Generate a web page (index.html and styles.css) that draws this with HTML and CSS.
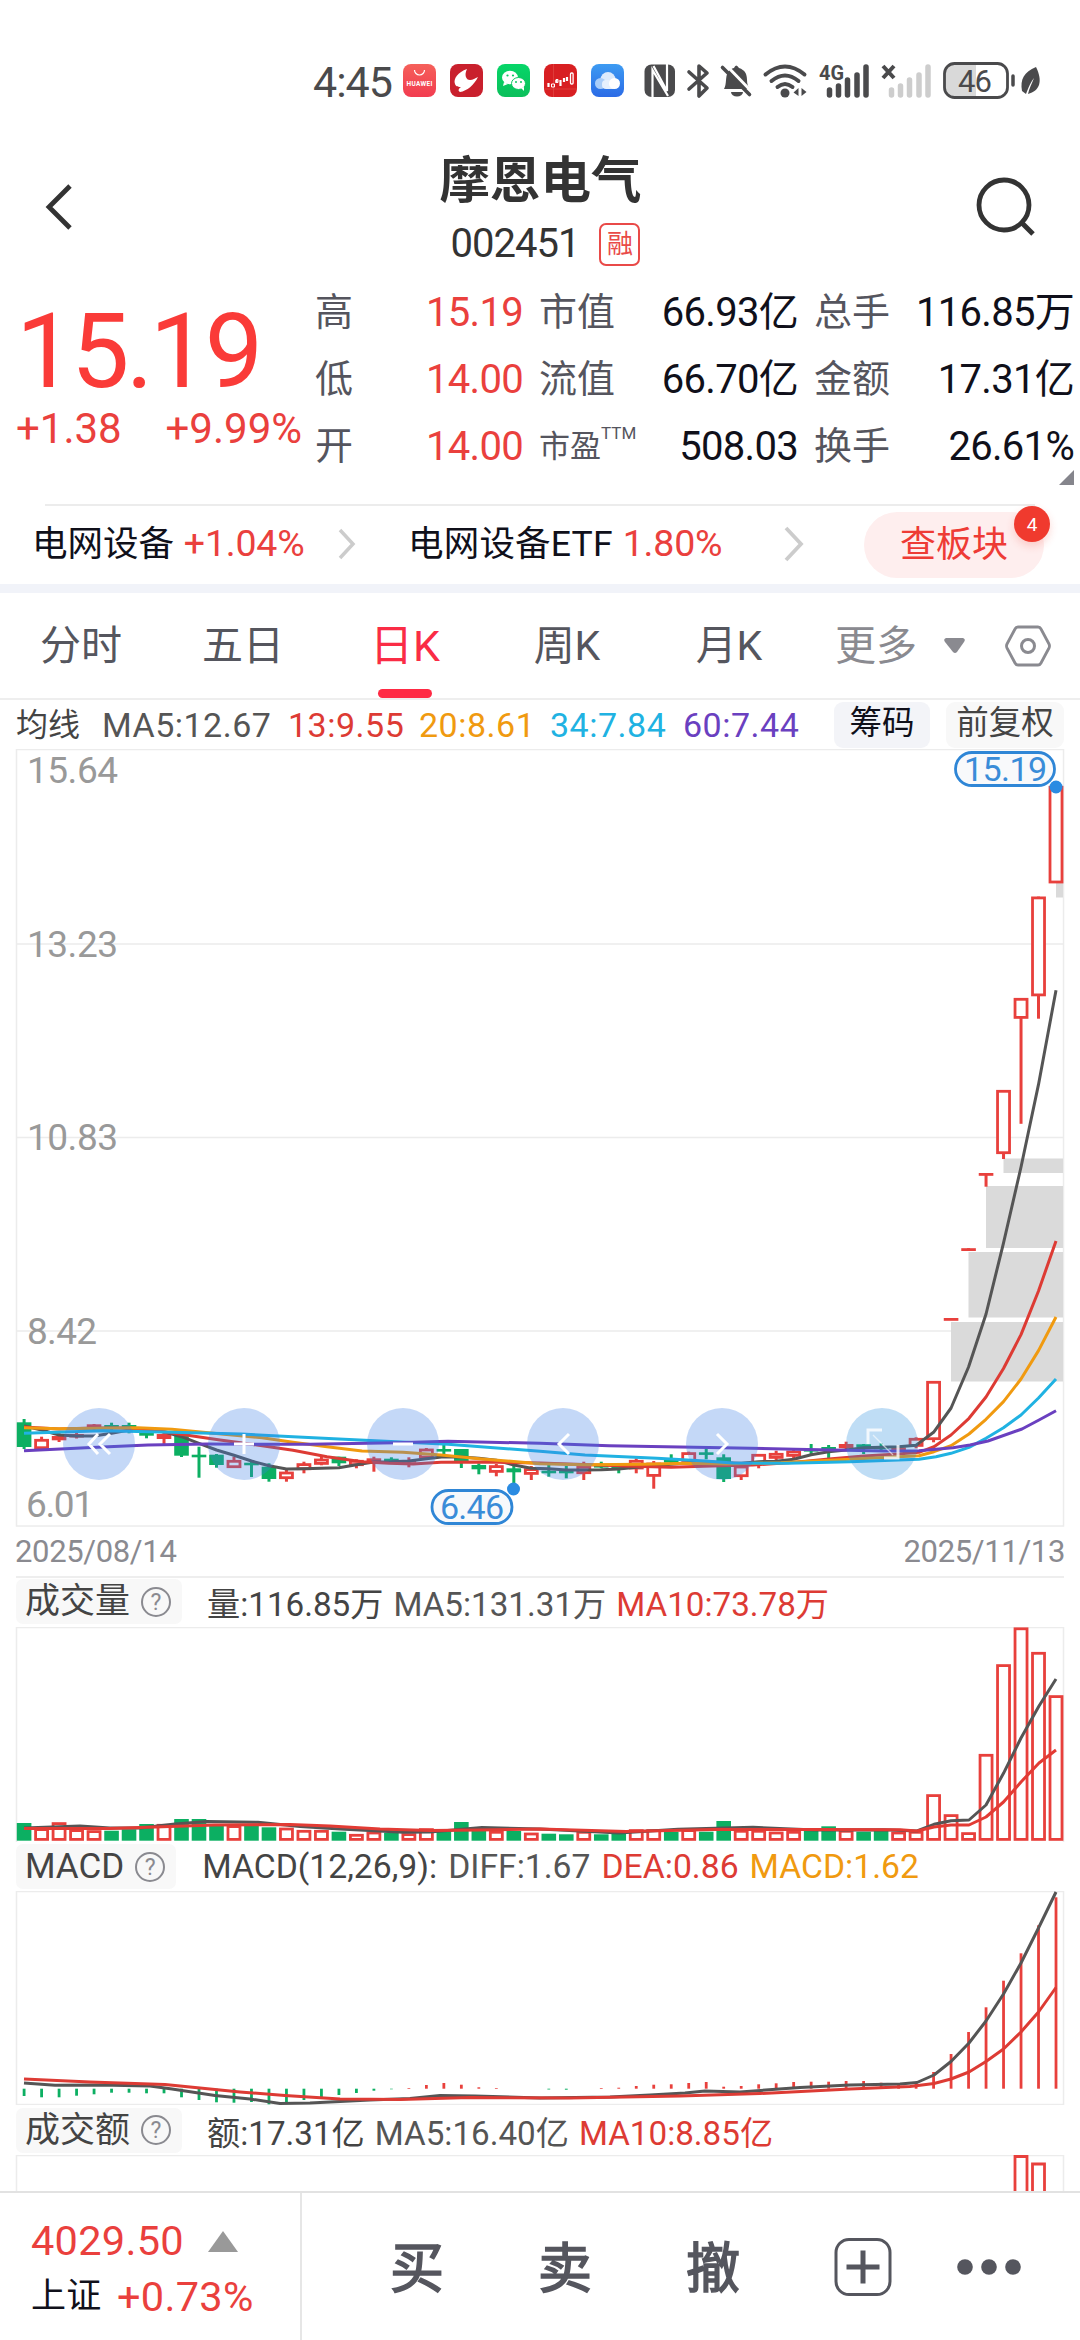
FILE: index.html
```html
<!DOCTYPE html>
<html lang="zh-CN">
<head>
    <meta charset="UTF-8" />
    <title>摩恩电气 002451</title>
    <link rel="stylesheet" href="styles.css">
</head>
<body>
    <div class="status-bar">
        <span class="clock">4:45</span>
        <svg class="status-icons" width="680" height="50" viewBox="400 55 680 50">
            <defs>
                <linearGradient id="hw" x1="0" y1="0" x2="0" y2="1"><stop offset="0" stop-color="#f5605a"/><stop offset="1" stop-color="#f23c50"/></linearGradient>
                <linearGradient id="cloud" x1="0" y1="0" x2="0" y2="1"><stop offset="0" stop-color="#3d9bf2"/><stop offset="1" stop-color="#2b6be6"/></linearGradient>
                <linearGradient id="wx" x1="0" y1="0" x2="0" y2="1"><stop offset="0" stop-color="#06d668"/><stop offset="1" stop-color="#0bbf5b"/></linearGradient>
            </defs>
            <rect x="403" y="64" width="33" height="33" rx="8" fill="url(#hw)"/>
            <path d="M414.500 70a5 5 0 0 0 10 0" fill="none" stroke="#fff" stroke-width="1.200"/>
            <text x="406.500" y="85.500" font-size="6.500" font-weight="700" fill="#fff" textLength="26">HUAWEI</text>
            <rect x="450" y="64" width="33" height="33" rx="8" fill="#c9202d"/>
            <path d="M467 69C458 72 453 79 455 84c1 3 4 3 6 3-3 2-3 4-1 5 7-1 14-7 18-15-3 1-5 3-8 3-4 0-6-5-3-11z" fill="#fff"/>
            <rect x="497" y="64" width="33" height="33" rx="8" fill="url(#wx)"/>
            <ellipse cx="510" cy="77.500" rx="8" ry="6.800" fill="#fff"/><path d="M504 82l-1 4 5-2z" fill="#fff"/>
            <ellipse cx="518.500" cy="83.500" rx="7" ry="6" fill="#fff" stroke="#0bc860" stroke-width="1"/><path d="M521 88l3 3 0-4z" fill="#fff"/>
            <g fill="#0bc860"><circle cx="507.500" cy="75.500" r="1.100"/><circle cx="513" cy="75.500" r="1.100"/><circle cx="516" cy="82" r="1"/><circle cx="521" cy="82" r="1"/></g>
            <rect x="544" y="64" width="33" height="33" rx="8" fill="#d81f22"/>
            <path d="M544 89h33M553.500 64v33" stroke="#e2504c" stroke-width=".6"/>
            <path d="M548.500 83v4M556.500 80v3M560.500 80v6M564 78v4M567 77v4" stroke="#fff" stroke-width="2.200"/>
            <path d="M551.500 84h3v3h-3zM556 79.500h2v3h-2z" fill="none" stroke="#fff" stroke-width="1"/>
            <rect x="570.500" y="73" width="2.600" height="11" rx="1" fill="none" stroke="#fff" stroke-width="1.300"/>
            <rect x="591" y="64" width="33" height="33" rx="8" fill="url(#cloud)"/>
            <circle cx="608" cy="79.500" r="7.500" fill="#dceafc"/><circle cx="600.500" cy="83.500" r="5.500" fill="#a9cdf9"/><rect x="602" y="80" width="14" height="9" rx="4" fill="#e6f0fd"/><circle cx="614.500" cy="83.500" r="5.500" fill="#fff"/>

            <!-- nfc -->
            <rect x="644.500" y="64.500" width="30.500" height="32.500" rx="7" fill="#4a4a4c"/>
            <path d="M652.500 97V70l15.500 26M667 64v27L653.500 66" fill="none" stroke="#fff" stroke-width="2.200"/>
            <!-- bluetooth -->
            <path d="M689 72l18 16-8 8V66l8 7-18 16" fill="none" stroke="#4a4a4c" stroke-width="3.600" stroke-linejoin="round" stroke-linecap="round"/>
            <!-- muted bell -->
            <path d="M724 89c3-5 1-12 4-17 2-3 5-4 6-4q2-5 5 0c6 2 8 6 8 12 0 4 1 7 3 9z" fill="#4a4a4c"/>
            <path d="M731 92h12a6 4.500 0 0 1-12 0z" fill="#4a4a4c"/>
            <path d="M725 64l28 29" stroke="#fff" stroke-width="3"/>
            <path d="M722.500 67.500l27 27" stroke="#4a4a4c" stroke-width="3.600" stroke-linecap="round"/>
            <!-- wifi -->
            <g fill="none" stroke="#4a4a4c" stroke-width="4" stroke-linecap="round">
                <path d="M765.500 74.500q19.500-16 39 0M771.500 81q13.500-11 27 0M777.500 87q7.500-6 15 0"/>
            </g>
            <circle cx="785" cy="93" r="4.500" fill="#4a4a4c"/>
            <path d="M798.500 88v8l-5-3.500zM801.500 96v-8l5 4z" fill="#4a4a4c"/>
            <!-- cellular -->
            <text x="819" y="80" font-size="21" font-weight="700" fill="#4a4a4c" textLength="25" lengthAdjust="spacingAndGlyphs">4G</text>
            <path d="M829.500 90v5M838.500 86v9M847.500 80v15M857 75v20M866 67v28" stroke="#4a4a4c" stroke-width="5.500" stroke-linecap="round"/>
            <path d="M883 66l11 12M894 66l-11 12" stroke="#4a4a4c" stroke-width="4"/>
            <path d="M891.500 90v5M900.500 86v9M909.500 80v15M919 75v20M928 67v28" stroke="#cdcdcd" stroke-width="5.500" stroke-linecap="round"/>
            <!-- battery -->
            <path d="M953 64h23v33h-23q-8 0-8-8V72q0-8 8-8z" fill="#d9d9d9"/>
            <rect x="944.500" y="63.500" width="63" height="34" rx="10" fill="none" stroke="#4a4a4c" stroke-width="2.800"/>
            <path d="M1013 76v9" stroke="#4a4a4c" stroke-width="3.500" stroke-linecap="round"/>
            <text x="958" y="92" font-size="31" fill="#4a4a4c" textLength="34">46</text>
            <path d="M1036 67c-12 5-16 12-14 24l4 3c3-8 5-12 8-16-2 5-5 11-6 16 12-3 15-13 8-27z" fill="#4a4a4c"/>
        </svg>
    </div>

    <header class="stock-header">
        <svg class="back" width="36" height="52" viewBox="0 0 36 52"><path d="M28 5L7 26l21 21" fill="none" stroke="#333" stroke-width="4.800"/></svg>
        <div class="stock-title">
            <h1>摩恩电气</h1>
            <div class="stock-code"><span>002451</span><span class="margin-tag">融</span></div>
        </div>
        <svg class="search" width="62" height="62" viewBox="0 0 62 62"><circle cx="29" cy="30" r="25" fill="none" stroke="#333" stroke-width="4.800"/><path d="M46 47l12 12" stroke="#333" stroke-width="5"/></svg>
    </header>

    <section class="quote">
        <div class="price">
            <div class="last">15.19</div>
            <div class="change"><span>+1.38</span><span>+9.99%</span></div>
        </div>
        <dl class="stats">
            <dt>高</dt><dd class="up">15.19</dd><dt>市值</dt><dd>66.93亿</dd><dt>总手</dt><dd>116.85万</dd>
            <dt>低</dt><dd class="up">14.00</dd><dt>流值</dt><dd>66.70亿</dd><dt>金额</dt><dd>17.31亿</dd>
            <dt>开</dt><dd class="up">14.00</dd><dt class="pe">市盈<sup>TTM</sup></dt><dd>508.03</dd><dt>换手</dt><dd>26.61%</dd>
        </dl>
        <i class="corner"></i>
    </section>

    <section class="sector">
        <div class="sector-item">电网设备 <span class="up">+1.04%</span></div>
        <svg class="chevron" width="20" height="34" viewBox="0 0 20 34"><path d="M3 3l13 14L3 31" fill="none" stroke="#ccc" stroke-width="3.500"/></svg>
        <div class="sector-item etf">电网设备ETF <span class="up">1.80%</span></div>
        <svg class="chevron last-chevron" width="22" height="38" viewBox="0 0 22 38"><path d="M3 3l15 16L3 35" fill="none" stroke="#ccc" stroke-width="3.800"/></svg>
        <div class="sector-btn">查板块<span class="badge">4</span></div>
    </section>

    <nav class="tabs">
        <span class="tab">分时</span>
        <span class="tab">五日</span>
        <span class="tab active">日K</span>
        <span class="tab">周K</span>
        <span class="tab">月K</span>
        <span class="tab more">更多</span>
        <svg width="24" height="18" viewBox="0 0 24 18"><path d="M4 1h17q3 1 1 4l-7 10q-2 2-4 0L3 5Q1 2 4 1z" fill="#8a8a90"/></svg>
        <svg class="settings" width="48" height="44" viewBox="0 0 48 44"><path d="M14 3h20q2 0 3 2l8 15q1 2 0 4l-8 15q-1 2-3 2H14q-2 0-3-2L3 24q-1-2 0-4l8-15q1-2 3-2z" fill="none" stroke="#8a8a90" stroke-width="2.800"/><circle cx="24" cy="22" r="6.500" fill="none" stroke="#8a8a90" stroke-width="3"/></svg>
    </nav>

    <div class="ma-row">
        <span class="ma-name">均线</span>
        <span class="ma ma5">MA5:12.67</span>
        <span class="ma ma13">13:9.55</span>
        <span class="ma ma20">20:8.61</span>
        <span class="ma ma34">34:7.84</span>
        <span class="ma ma60">60:7.44</span>
        <span class="chip chips">筹码</span>
        <span class="chip adjust">前复权</span>
    </div>

    <svg class="chart" width="1080" height="778" viewBox="0 0 1080 778">
        <g class="frame">
            <rect x="16.500" y=".5" width="1047" height="776.500"/>
            <path d="M16 195h1047M16 388.500h1047M16 582h1047"/>
        </g>
        <g class="axis">
            <text x="27" y="34" textLength="91">15.64</text>
            <text x="27" y="208" textLength="91">13.23</text>
            <text x="27" y="401" textLength="91">10.83</text>
            <text x="27" y="595" textLength="70">8.42</text>
            <text x="26" y="768" textLength="68">6.01</text>
        </g>
        <g fill="#dadada">
            <rect x="951" y="573" width="112" height="59.500"/>
            <rect x="968.500" y="503" width="94.500" height="65.500"/>
            <rect x="986" y="437" width="77" height="62"/>
            <rect x="1003.500" y="409.500" width="59.500" height="14.500"/>
            <rect x="1056" y="134" width="7" height="14.500"/>
        </g>
        <g id="candles"></g>
        <g class="lines">
            <polyline id="ma5" stroke="#555"/>
            <polyline stroke="#dd3b34" points="24,678 59,680 94,679 130,679 165,683 186,686 220,691 257,696 293,701.3 327,707.7 362,712.7 389,714.3 413,715 441,713.3 482,713 540,714 626,717 671,718.3 712,717 753,716 795,713.3 829,710 864,707 898,705 919,703.3 934,697.7 951,686 969,669.3 986,648 1003.5,619.5 1021,585.6 1038.5,542 1056,492"/>
            <polyline stroke="#f09a10" points="24,678.7 59,679.7 138,678.7 172,680.3 224,685.3 262,688.7 293,693.3 327,697.7 362,702 403,703.3 441,706 482,710 540,714.7 585,715.7 643,715.3 688,714.3 726,715 781,713.7 850,710.3 898,707.7 919,706.7 934,702.7 951,696.7 969,685 986,670.3 1003.5,652.6 1021,630 1038.5,601.6 1056,568"/>
            <polyline stroke="#20b2e2" points="24,684.3 103,681.7 172,683.3 241,685 293,687.7 344,690.3 396,692.7 448,695.3 540,702.3 585,706 657,709.3 705,712 733,714 788,714.3 850,712.7 919,710.3 936,707.7 951,704.3 969,698.3 986,689.3 1003.5,678.7 1021,666 1038.5,649 1056,630"/>
            <polyline stroke="#6a40c0" points="24,701.7 86,698.7 148,696 207,695 310,695.3 396,693.7 448,692.3 540,694.3 609,696.7 723,698.7 795,700.3 884,702 919,701.7 953,698.7 970,696 988,692 1022,680 1039,671 1056,661.7"/>
        </g>
        <g class="controls">
            <circle cx="99" cy="695" r="36"/><circle cx="244" cy="695" r="36"/><circle cx="403" cy="695" r="36"/>
            <circle cx="563" cy="695" r="36"/><circle cx="722" cy="695" r="36"/><circle class="full" cx="882" cy="695" r="36"/>
            <path d="M98 685l-9 10 9 10M110 685l-10 10 10 10M234 695h20M244 685v20M393 695h20M569 685l-10 10 10 10M717 685l10 10-10 10"/>
            <path class="thin" d="M868 695v-14h14M898 696v13h-14"/>
            <path class="thinner" d="M873 686l20 20"/>
        </g>
        <g class="marks">
            <rect x="955.500" y="3.500" width="99" height="33" rx="16.500"/>
            <circle cx="1056" cy="38" r="6.500"/>
            <text x="964" y="32" textLength="83">15.19</text>
            <rect x="432" y="741.500" width="80" height="33" rx="16.500"/>
            <circle cx="513.500" cy="740" r="6.500"/>
            <text x="440" y="770" textLength="64">6.46</text>
        </g>
    </svg>
    <div class="dates"><span>2025/08/14</span><span>2025/11/13</span></div>

    <div class="indicator first">
        <span class="ind-name">成交量<i class="help">?</i></span>
        <span class="val dark">量:116.85万</span><span class="val">MA5:131.31万</span><span class="val red">MA10:73.78万</span>
    </div>
    <svg class="chart" width="1080" height="215" viewBox="0 0 1080 215">
        <g class="frame"><path d="M16.500 215V.5h1047V215"/></g>
        <g id="volume"></g>
        <g class="lines">
            <polyline stroke="#555" points="24,201 80,199 110,201 140,201 175,197 207,194.500 258,195.300 300,199.500 340,202 403,205.300 430,205 482,200.500 540,202 619,206 678,202.300 753,200.300 815,203 884,202.700 917,204 934,197.300 951,193.700 969,193 986,178 1003.5,146.300 1021,111 1039,79 1056,52"/>
            <polyline stroke="#e23b34" points="24,201.500 110,201.500 155,200 215,198 290,197.500 330,199 380,202 430,203.500 480,203 540,202 626,204.500 713,202.500 815,202.500 900,202.700 917,204 934,200 951,198 969,198 986,190 1003.500,175 1021,155 1039,136 1056,123"/>
        </g>
    </svg>

    <div class="indicator second">
        <span class="ind-name">MACD<i class="help">?</i></span>
        <span class="val dark">MACD(12,26,9):</span><span class="val">DIFF:1.67</span><span class="val red">DEA:0.86</span><span class="val orange">MACD:1.62</span>
    </div>
    <svg class="chart" width="1080" height="214" viewBox="0 0 1080 214">
        <g class="frame"><rect x="16.500" y=".5" width="1047" height="213"/></g>
        <g id="macd"></g>
        <g class="lines">
            <polyline stroke="#555" points="24,192 55,194.300 100,194 150,195 172,198 215,204.500 250,208 280,212.500 310,212 370,209 410,207.500 440,204.500 475,205 540,207 610,206 650,204 685,202 705,200 740,201 800,196.500 850,194 900,193 917,191.500 934,184 951,170.500 969,152 986,130 1003.500,103 1021,72 1038.500,37 1056,1"/>
            <polyline stroke="#dd3b34" points="24,188 90,191 165,193.500 200,197 240,201 285,204.500 340,208 400,208.500 470,206.500 570,207 680,205 760,202.500 850,198 910,195.500 934,192.500 951,188 969,181 986,170.500 1003.500,158 1021,141 1038.500,121 1056,96.500"/>
        </g>
    </svg>

    <div class="indicator third">
        <span class="ind-name">成交额<i class="help">?</i></span>
        <span class="val dark">额:17.31亿</span><span class="val">MA5:16.40亿</span><span class="val red">MA10:8.85亿</span>
    </div>
    <svg class="chart" width="1080" height="36" viewBox="0 0 1080 36">
        <g class="frame"><path d="M16.500 40V.5h1047V40"/></g>
        <path d="M1015 40V1.500h12V40M1032.500 40V9h12V40" fill="#fff" stroke="#e8403c" stroke-width="2.800"/>
    </svg>

    <footer class="bottom-bar">
        <div class="index">
            <div class="index-row up"><span class="points">4029.50</span><i class="tri"></i></div>
            <div class="index-row"><span class="index-name">上证</span><span class="up pct">+0.73%</span></div>
        </div>
        <div class="actions">
            <span>买</span>
            <span>卖</span>
            <span>撤</span>
            <svg width="60" height="60" viewBox="0 0 60 60"><rect x="2" y="2.500" width="54" height="55" rx="13" fill="none" stroke="#55565e" stroke-width="3"/><path d="M12.500 30h33M29 13.500v33" stroke="#55565e" stroke-width="5"/></svg>
            <svg width="66" height="18" viewBox="0 0 66 18"><g fill="#55565e"><circle cx="9" cy="9" r="7.800"/><circle cx="33" cy="9" r="7.800"/><circle cx="57" cy="9" r="7.800"/></g></svg>
        </div>
    </footer>
    <script src="script.js"></script>
</body>
</html>
```
FILE: styles.css
```css
* {
    box-sizing: border-box;
}
body {
    margin: 0;
    width: 1080px;
    height: 2340px;
    overflow: hidden;
    background-color: #fff;
    color: #10101a;
    font-family: Roboto, "Noto Sans CJK SC", sans-serif;
    display: flex;
    flex-direction: column;
}
svg {
    display: block;
    flex: none;
}
svg text {
    font-family: Roboto, "Noto Sans CJK SC", sans-serif;
}
i {
    font-style: normal;
}
.up {
    color: #ea403d;
}

/* status bar */
.status-bar {
    height: 130px;
    padding-top: 55px;
    display: flex;
    align-items: flex-start;
}
.clock {
    width: 400px;
    padding-left: 313px;
    font-size: 43px;
    line-height: 54px;
    letter-spacing: -1px;
    color: #4a4a4c;
    white-space: nowrap;
}

/* header */
.stock-header {
    height: 150px;
    padding: 0 43px 0 42px;
    display: flex;
    justify-content: space-between;
}
.back {
    margin-top: 51px;
}
.search {
    margin-top: 45px;
}
.stock-title {
    padding: 19px 0 0 28px;
    text-align: center;
}
h1 {
    margin: 0;
    font-size: 50.5px;
    line-height: 64px;
    color: #333;
}
.stock-code {
    margin-top: 4px;
    padding-left: 10px;
    display: flex;
    align-items: center;
    justify-content: center;
    gap: 20px;
    font-size: 40px;
    line-height: 54px;
    letter-spacing: -1px;
    color: #333;
}
.margin-tag {
    width: 41px;
    height: 43px;
    border: 2px solid #e94a48;
    border-radius: 7px;
    font-size: 26px;
    line-height: 38px;
    letter-spacing: 0;
    color: #e94a48;
}

/* quote */
.quote {
    position: relative;
    height: 224px;
    display: flex;
}
.price {
    width: 315px;
    padding: 22px 0 0 16px;
    color: #ea403d;
}
.last {
    font-size: 104px;
    line-height: 100px;
    letter-spacing: -3.5px;
    color: #fa3b38;
}
.change {
    display: flex;
    justify-content: space-between;
    padding-right: 13px;
    font-size: 42px;
    line-height: 60px;
    margin-top: -3px;
    letter-spacing: 0;
}
.stats {
    margin: 0;
    width: 759px;
    display: grid;
    grid-template-columns: 60px 148px 92px 183px 92px 184px;
    grid-auto-rows: 67px;
    line-height: 65px;
}
.stats dt {
    font-size: 38px;
    color: #55555e;
    white-space: nowrap;
}
.stats dt:nth-of-type(3n+2),
.stats dt:nth-of-type(3n) {
    padding-left: 16px;
}
.stats dd {
    margin: 0;
    font-size: 40px;
    letter-spacing: -.7px;
    text-align: right;
    white-space: nowrap;
}
.stats .pe {
    font-size: 31px;
    display: flex;
}
.pe sup {
    font-size: 17px;
    line-height: 38px;
}
.corner {
    position: absolute;
    right: 6px;
    bottom: 19px;
    border-left: 15px solid transparent;
    border-bottom: 15px solid #85858c;
}

/* sector */
.sector {
    height: 89px;
    border-bottom: 9px solid #f1f3f9;
    display: flex;
    align-items: center;
    padding-left: 32px;
    font-size: 36px;
    background: linear-gradient(#ececec, #ececec) 45px 0 / 990px 2px no-repeat;
}
.sector-item {
    width: 305px;
    font-size: 35.5px;
    line-height: 40px;
    padding-bottom: 2px;
    white-space: nowrap;
    letter-spacing: 0;
}
.sector-item .up {
    margin-left: 1px;
    font-size: 37.5px;
    letter-spacing: -.2px;
}
.sector-item.etf {
    width: 374px;
    margin-left: 51px;
    letter-spacing: .2px;
}
.last-chevron {
    margin-left: 1px;
    margin-right: 59px;
}
.sector-btn {
    position: relative;
    width: 180px;
    height: 66px;
    margin-top: 2px;
    border-radius: 33px;
    background-color: #feeeee;
    color: #ee3b35;
    line-height: 66px;
    text-align: center;
}
.badge {
    position: absolute;
    top: -6px;
    right: -6px;
    width: 36px;
    height: 36px;
    border-radius: 50%;
    background-color: #f03a2e;
    box-shadow: 0 4px 8px rgba(240, 58, 46, .2);
    color: #fff;
    font-size: 19px;
    line-height: 37px;
}

/* tabs */
.tabs {
    height: 107px;
    border-bottom: 2px solid #eee;
    display: flex;
    align-items: center;
}
.tab {
    width: 162px;
    height: 105px;
    display: flex;
    flex-direction: column;
    align-items: center;
    font-size: 41px;
    line-height: 107px;
    color: #55565e;
}
.tab.active {
    color: #fa2c45;
    font-size: 43px;
}
.tab.active::after {
    content: "";
    width: 54px;
    height: 9px;
    margin-top: -11px;
    border-radius: 5px;
    background-color: #ff2a44;
}
.tab.more {
    width: 132px;
    color: #8a8a90;
}
.settings {
    margin-left: 38px;
}

/* moving averages */
.ma-row {
    height: 49px;
    padding-left: 16px;
    display: flex;
    align-items: center;
    font-size: 34px;
    line-height: 48px;
    white-space: nowrap;
}
.ma-name {
    width: 86px;
    font-size: 32px;
    color: #444;
}
.ma { letter-spacing: .5px; width: 131px; }
.ma5 { width: 186px; color: #555; }
.ma13 { color: #dd3b34; }
.ma20 { color: #f09a10; }
.ma34 { width: 133px; color: #20b2e2; }
.ma60 { width: 151px; color: #6a40c0; }
.chip {
    height: 46px;
    border-radius: 9px;
    font-size: 32.5px;
    line-height: 43px;
    text-align: center;
}
.chips {
    width: 96px;
    background-color: #f3f4f8;
}
.adjust {
    width: 118px;
    margin-left: 16px;
    background-color: #f8f8f8;
    color: #444;
}

/* charts */
.frame {
    fill: none;
    stroke: #ececec;
    stroke-width: 1.5;
}
.axis {
    font-size: 37px;
    fill: #999;
}
.lines {
    fill: none;
    stroke-width: 3;
    stroke-linejoin: round;
}
.controls circle { fill: rgba(60, 125, 230, .3); }
.controls .full { fill: rgba(42, 141, 222, .3); }
.controls path {
    fill: none;
    stroke: #fff;
    stroke-width: 3;
}
.controls .thin { opacity: .8; }
.controls .thinner {
    stroke-width: 1.3;
    opacity: .6;
}
.marks rect {
    fill: #f8f9fb;
    stroke: #2f86d6;
    stroke-width: 2.8;
}
.marks circle { fill: #2a8be2; }
.marks text {
    fill: #3a8cd8;
    font-size: 34px;
}
.dates {
    height: 49px;
    padding: 0 15px;
    display: flex;
    justify-content: space-between;
    font-size: 31px;
    line-height: 50px;
    letter-spacing: -.35px;
    color: #8a8a90;
}

/* indicators */
.indicator {
    display: flex;
    align-items: center;
    padding-left: 16px;
    font-size: 33.2px;
    white-space: nowrap;
}
.first {
    height: 51px;
    background: linear-gradient(#eee, #eee) 16px 0 / 1048px 2px no-repeat;
}
.second {
    height: 49px;
    font-size: 33.7px;
}
.third { height: 50px; }
.ind-name {
    height: 45px;
    padding: 0 11px 0 9px;
    margin-right: 25px;
    display: flex;
    align-items: center;
    gap: 11px;
    border-radius: 7px;
    background-color: #f8f8f8;
    font-size: 35px;
    line-height: 45px;
    color: #444;
}
.second .ind-name {
    margin-right: 26px;
}
.help {
    width: 30px;
    height: 30px;
    border: 2px solid #8a8a90;
    border-radius: 50%;
    font-size: 23px;
    line-height: 27px;
    text-align: center;
    color: #8a8a90;
}
.val {
    margin-right: 10px;
    color: #555;
}
.second .val { margin-right: 11px; }
.val.dark { color: #444; }
.val.red { color: #dd3b34; }
.val.orange { color: #f09a10; }

/* bottom bar */
.bottom-bar {
    flex: 1;
    border-top: 2px solid #e2e2e2;
    display: flex;
    background-color: #fff;
}
.index {
    width: 302px;
    padding: 20px 0 0 31px;
    border-right: 2px solid #e6e6e6;
    line-height: 56px;
    font-size: 41.5px;
    white-space: nowrap;
}
.index-row {
    display: flex;
    align-items: center;
    letter-spacing: .3px;
}
.tri {
    margin-left: 24px;
    border: 15px solid transparent;
    border-top: 0;
    border-bottom: 21px solid #999;
}
.index-name {
    width: 86px;
    font-size: 35px;
}
.actions {
    flex: 1;
    display: flex;
    align-items: center;
    padding-left: 88px;
    font-size: 54px;
    color: #55565e;
}
.actions span {
    width: 148px;
    padding-bottom: 5px;
    -webkit-text-stroke: 1.6px #55565e;
}
.actions svg:last-child {
    margin-left: 62px;
}
```
FILE: script.js
```js
const NS = 'http://www.w3.org/2000/svg';
const RED = '#e8403c';
const GREEN = '#0caf62';
const X0 = 24.1;
const STEP = 17.49;

// r/g, body top, body bottom, high, low
const candles = [
    ['g', 673.3, 698, 670, 700], ['r', 690, 700, 687.7, 700], ['r', 687, 691.3, 684, 693], ['r', 685, 688.5, 683, 689.5],
    ['r', 675.3, 679, 675, 681], ['g', 676, 678, 673.7, 681], ['g', 676, 678, 673.7, 684.3], ['g', 682.7, 686.7, 681, 689.3],
    ['r', 685, 690, 682.7, 695], ['g', 686, 706.7, 684.3, 708], ['g', 705.7, 708.3, 697.7, 728.7], ['g', 705.7, 716, 705, 718.7],
    ['r', 711, 719, 707.7, 719], ['g', 713.7, 716.3, 713, 728], ['g', 717.7, 730, 714.3, 732.7], ['r', 722.7, 730, 719.3, 732.7],
    ['r', 714.3, 721, 712.7, 724.3], ['r', 709.7, 715.7, 708, 716.3], ['g', 707.7, 714.3, 707.7, 717], ['r', 711, 717, 710.3, 719.3],
    ['r', 709.3, 713.7, 707.7, 722.7], ['g', 709.7, 711.7, 708.3, 713], ['r', 711, 713.7, 708.3, 718.3], ['r', 699.7, 709.3, 699, 711],
    ['g', 700, 702.3, 695, 705], ['g', 700, 713.3, 700, 719], ['g', 716, 720.3, 714.3, 725.3], ['r', 716.3, 723.7, 715, 727.3],
    ['g', 719.3, 723.3, 716, 736], ['r', 719.3, 725.7, 717, 731], ['g', 721.7, 723.7, 716, 727.7], ['g', 721.7, 724.3, 717, 729.3],
    ['r', 717, 725, 712.7, 731], ['g', 716, 718, 712.7, 719.3], ['g', 717, 719, 716, 724.3], ['r', 711, 720.3, 709.3, 724.3],
    ['r', 713.7, 727.7, 712, 739.7], ['g', 711, 713, 705.3, 715], ['r', 703.3, 712.7, 702.7, 714.3], ['g', 703.3, 705.7, 699.3, 710.3],
    ['g', 708.3, 730, 705.3, 733], ['r', 716.7, 728, 716, 731], ['r', 705, 716, 705, 719.3], ['r', 704, 709.7, 701.7, 711.7],
    ['r', 701.7, 707.7, 701, 710.3], ['g', 700, 701.7, 695, 706], ['g', 698, 700, 696, 711.7], ['r', 695, 699.3, 692.7, 701],
    ['g', 695.3, 698.3, 695, 705], ['g', 697.7, 700.3, 694.3, 702.7], ['r', 698.3, 701.7, 698, 702], ['r', 689, 697.7, 688.3, 699.3],
    ['r', 632, 691, 632, 693.3], ['r', 569, 571.8, 569, 571], ['r', 499.2, 502, 499.2, 501], ['r', 424, 426.8, 424, 437.7],
    ['r', 341, 405, 341, 410], ['r', 249, 269.7, 249, 374.8], ['r', 147.6, 247.2, 147.6, 269.7], ['r', 37, 134.3, 37, 134]
];

const ma5 = [677, 681, 686, 687, 687, 684.3, 681, 681, 682.7, 687.7, 694.3, 701, 706.3, 712, 716.7, 720, 719.7, 719.3, 718.7, 715.7,
    713, 712.7, 712, 709.7, 707.7, 708, 709.3, 711.3, 716, 719.3, 719.7, 721, 721, 720.7, 720, 718.3, 716.7, 715.3, 713.7, 712.7,
    713.7, 714.3, 712.7, 712.3, 710.3, 705.7, 702.7, 701, 698.7, 698.3, 697.7, 696.3, 683.3, 659, 618, 565, 493.8, 418, 335.4, 241.2];

const volumeTops = [196, 201.3, 195.3, 202.3, 203.3, 203.7, 202.3, 197, 197, 192, 192, 198, 198.3, 198.3, 200.3, 200.7, 203, 203, 204.7, 207,
    204.7, 205.7, 206.3, 201.3, 204, 195, 204, 204, 204, 205.7, 206.7, 207.3, 204, 207.3, 205.7, 202.3, 202.3, 204.7, 202.3, 204.7,
    194, 203, 203, 204.7, 204, 202.3, 199.3, 203, 204.7, 204, 204.7, 204, 167.3, 187.3, 205.3, 127, 37.3, 0.5, 25, 68.3];

const macdEnds = [205, 206.3, 206.3, 204.7, 203.3, 201.7, 201.7, 202.3, 202.3, 206.3, 209, 211.3, 211.7, 211, 213.3, 211.3, 209, 206.3, 204, 202,
    199.7, 198.3, 197, 194, 192, 193.7, 196.3, 197, 197.7, 197.7, 198.5, 198.7, 197.7, 197, 196.7, 195, 193.7, 193.3, 192, 191,
    195.7, 195, 193.3, 192.3, 191, 190.7, 190.7, 190, 190, 191.7, 193.3, 191.7, 181, 163, 141, 116.3, 89.7, 62.3, 34.3, 6.3];

function add(parent, name, attrs) {
    const el = document.createElementNS(NS, name);
    for (const key in attrs) el.setAttribute(key, attrs[key]);
    parent.appendChild(el);
}

function bar(parent, x, top, bottom, color) {
    const hollow = color === RED && bottom - top > 5;
    if (hollow) {
        add(parent, 'rect', { x: x - 6, y: top + 1.3, width: 12, height: bottom - top - 2.6, fill: '#fff', stroke: color, 'stroke-width': 2.8 });
    } else {
        add(parent, 'rect', { x: x - 7.3, y: top, width: 14.6, height: Math.max(bottom - top, 2.6), fill: color });
    }
}

const candleGroup = document.getElementById('candles');
const volumeGroup = document.getElementById('volume');
const macdGroup = document.getElementById('macd');

candles.forEach(([type, top, bottom, high, low], i) => {
    const x = X0 + STEP * i;
    const color = type === 'r' ? RED : GREEN;
    add(candleGroup, 'line', { x1: x, x2: x, y1: high, y2: low, stroke: color, 'stroke-width': 3 });
    bar(candleGroup, x, top, bottom, color);
    bar(volumeGroup, x, volumeTops[i], 213.7, color);

    const end = macdEnds[i];
    add(macdGroup, 'line', { x1: x, x2: x, y1: 197.7, y2: end, stroke: end > 197.7 ? GREEN : RED, 'stroke-width': 2.8 });
});

document.getElementById('ma5').setAttribute('points', ma5.map((y, i) => (X0 + STEP * i) + ',' + y).join(' '));
```
